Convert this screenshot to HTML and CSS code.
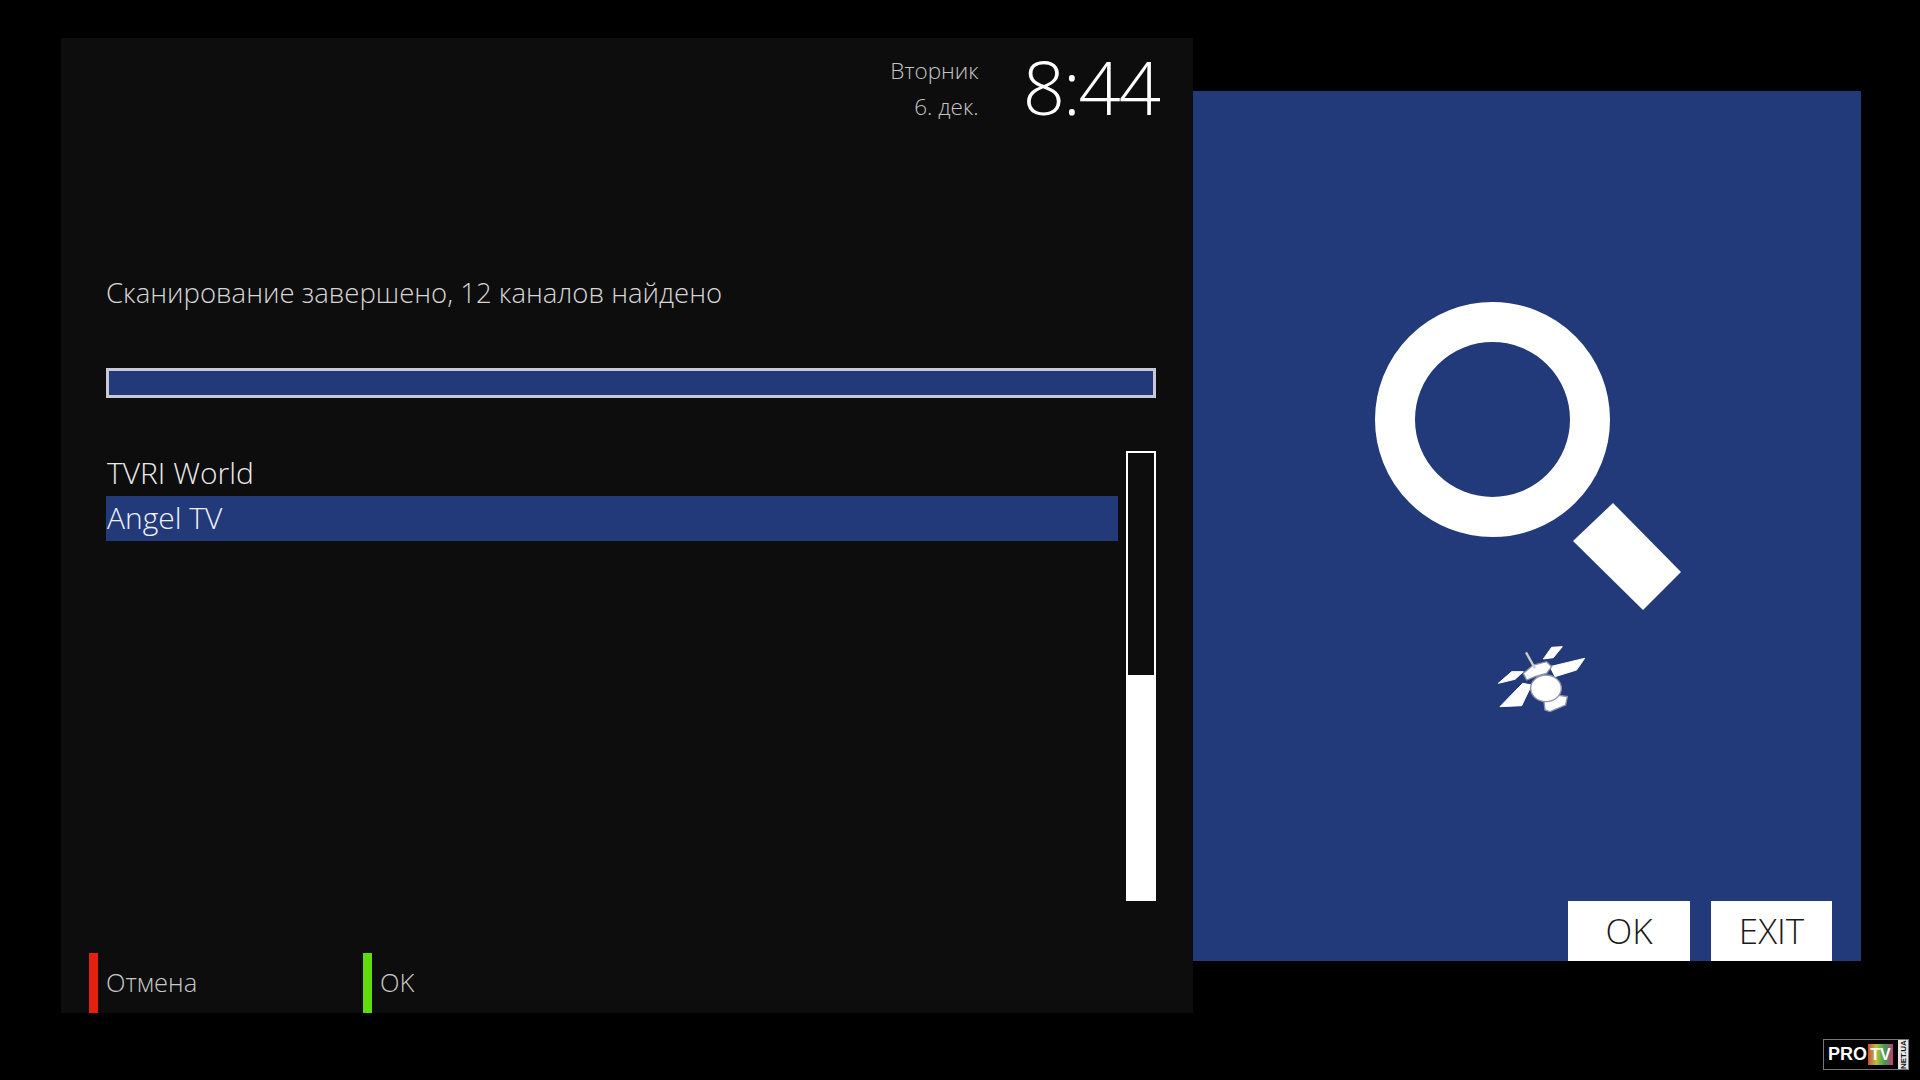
FILE: index.html
```html
<!DOCTYPE html>
<html lang="ru">

<head>
    <meta charset="UTF-8">
    <title>Сканирование</title>
    <link rel="stylesheet" href="styles.css">
</head>

<body>
    <div class="screen">
        <div class="scan-panel">
            <div class="top-bar">
                <div class="date">
                    <div>Вторник</div>
                    <div>6. дек.</div>
                </div>
                <div class="clock">8:44</div>
            </div>
            <div class="status">Сканирование завершено, 12 каналов найдено</div>
            <div class="progress"></div>
            <div class="list-area">
                <div class="channels">
                    <div class="channel">TVRI World</div>
                    <div class="channel selected">Angel TV</div>
                </div>
                <div class="scrollbar">
                    <div class="scroll-thumb"></div>
                </div>
            </div>
            <div class="footer">
                <div class="hint red">Отмена</div>
                <div class="hint green">OK</div>
            </div>
        </div>
        <div class="info-panel">
            <svg class="search-art" width="360" height="440" viewBox="0 0 360 440">
                <circle cx="152.5" cy="139.5" r="97.5" fill="none" stroke="#fff" stroke-width="40" />
                <polygon points="273,223 341,292 303,330 233,261" fill="#fff" />
                <g transform="translate(100 340) scale(0.3333)">
                    <g fill="#fff" stroke="#fff" stroke-width="3">
                        <polygon points="180,260 245,257 275,195 248,190" />
                        <polygon points="175,190 215,155 250,155 225,178" />
                        <polygon points="310,117 335,82 367,80 340,113" />
                        <polygon points="330,140 434,115 410,150 345,170" />
                    </g>
                    <g fill="#fff" stroke="#8d93a8" stroke-width="4">
                        <polygon points="312,245 350,225 382,230 377,255 330,275 315,270" />
                        <polygon points="250,160 280,135 320,125 335,140 320,160 285,170 260,180" />
                        <ellipse cx="318" cy="205" rx="46" ry="40" />
                    </g>
                    <line x1="258" y1="97" x2="285" y2="145" stroke="#ccc" stroke-width="7" />
                </g>
            </svg>
            <div class="buttons">
                <div class="action ok">OK</div>
                <div class="action exit">EXIT</div>
            </div>
        </div>
    </div>

    <div class="logo">
        <span class="logo-pro">PRO</span>
        <span class="logo-tv">TV</span>
        <span class="logo-net">NET.UA</span>
    </div>
</body>

</html>
```

FILE: styles.css
```css
html,
body {
    margin: 0;
    height: 100%;
}

body {
    background-color: #000;
    overflow: hidden;
    font-family: "Open Sans", "Liberation Sans", sans-serif;
    font-weight: 300;
    color: #fff;
}

.screen {
    display: flex;
    align-items: flex-start;
    padding: 38px 0 0 61px;
}

.scan-panel {
    display: flex;
    flex-direction: column;
    box-sizing: border-box;
    width: 1132px;
    height: 975px;
    padding: 0 37px 0 45px;
    background-color: #0d0d0d;
}

.top-bar {
    display: flex;
    justify-content: flex-end;
    height: 84px;
}

.date {
    margin: 15px 44px 0 0;
    text-align: right;
    font-size: 22.5px;
    line-height: 36px;
    color: #c4c4c4;
}

.clock {
    margin: -1px -3px 0 0;
    font-size: 74px;
    line-height: 100px;
    height: 85px;
    letter-spacing: -2px;
}

.status {
    margin-top: 151px;
    font-size: 27.5px;
    line-height: 40px;
    color: #d6d6d6;
}

.progress {
    box-sizing: border-box;
    height: 30px;
    margin-top: 55px;
    border: 3px solid #c8c9d2;
    background-color: #223a7a;
}

.list-area {
    display: flex;
    justify-content: space-between;
    height: 450px;
    margin-top: 53px;
}

.channels {
    width: 1012px;
}

.channel {
    height: 45px;
    padding-left: 1px;
    font-size: 30px;
    line-height: 43px;
    color: #eaeaea;
}

.selected {
    background-color: #223a7a;
    color: #eef1fa;
}

.scrollbar {
    display: flex;
    flex-direction: column;
    justify-content: flex-end;
    box-sizing: border-box;
    width: 30px;
    border: 2px solid #fff;
}

.scroll-thumb {
    height: 224px;
    margin: 0 -2px;
    background-color: #fff;
}

.footer {
    display: flex;
    height: 60px;
    margin: 52px 0 0 -17px;
}

.hint {
    box-sizing: border-box;
    width: 274px;
    height: 60px;
    padding-left: 8px;
    border-left: 9px solid;
    font-size: 25.5px;
    line-height: 58px;
    color: #c8c8c8;
}

.red {
    border-left-color: #e5200c;
}

.green {
    border-left-color: #5fdc0a;
}

.info-panel {
    display: flex;
    flex-direction: column;
    box-sizing: border-box;
    width: 668px;
    height: 870px;
    margin-top: 53px;
    background-color: #223a7a;
}

.search-art {
    display: block;
    margin: 189px 0 0 147px;
}

.buttons {
    display: flex;
    justify-content: flex-end;
    gap: 21px;
    margin-top: auto;
    padding-right: 29px;
}

.action {
    height: 60px;
    background-color: #fff;
    color: #1a1a1a;
    text-align: center;
    font-size: 35px;
    line-height: 60px;
}

.ok {
    width: 122px;
}

.exit {
    width: 121px;
}

.logo {
    position: absolute;
    left: 1823px;
    top: 1039px;
    display: flex;
    align-items: center;
    box-sizing: border-box;
    width: 86px;
    height: 31px;
    border: 1px solid #777;
    font-family: "Liberation Sans", sans-serif;
}

.logo-pro {
    margin-left: 4px;
    font-size: 18px;
    font-weight: 700;
}

.logo-tv {
    width: 25px;
    height: 21px;
    margin-left: 1px;
    background: linear-gradient(90deg, #c9503a, #b9c23a, #3f9a55, #c93a7a);
    text-align: center;
    font-size: 16px;
    line-height: 21px;
    font-weight: 700;
}

.logo-net {
    display: flex;
    align-items: center;
    justify-content: center;
    width: 10px;
    height: 29px;
    margin-left: auto;
    background-color: #e8e8e8;
    color: #111;
    writing-mode: vertical-rl;
    transform: rotate(180deg);
    font-size: 8px;
    font-weight: 700;
}
```
